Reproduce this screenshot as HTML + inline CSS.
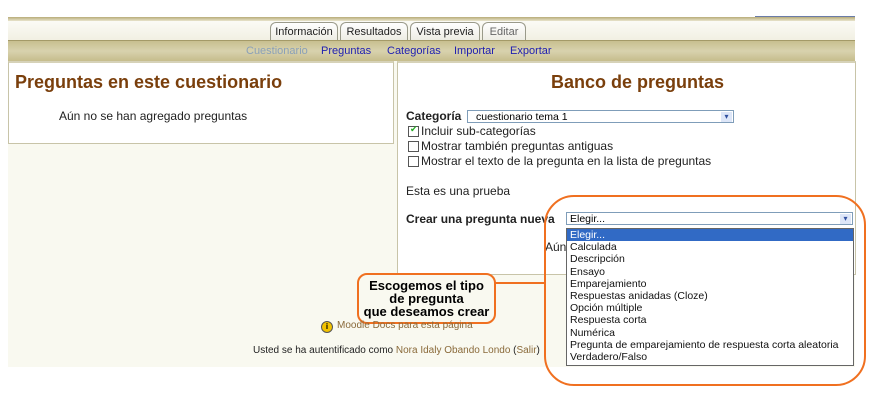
<!DOCTYPE html>
<html><head><meta charset="utf-8"><style>
body{margin:0;width:875px;height:400px;background:#fff;font-family:"Liberation Sans",sans-serif;position:relative;overflow:hidden}
.a{position:absolute}
.page{left:8px;top:18px;width:847px;height:349px;background:#f9f9f0}
.topline{left:8px;top:17px;width:847px;height:4px;background:linear-gradient(#b8ac78,#e8e4cc)}
.tabbar{left:8px;top:21px;width:847px;height:20px;background:linear-gradient(#fbfbf6,#f1efe2)}
.tab{top:22px;height:18px;border:1px solid #9a9a8a;border-bottom:none;border-radius:6px 6px 0 0;background:linear-gradient(#fff,#ecebe2);font-size:11px;line-height:18px;text-align:center;color:#222}
.sub{left:8px;top:40px;width:847px;height:20px;background:linear-gradient(#c8bf90,#d8d2ae 50%,#c6bd8c);border-top:1px solid #a49a68}
.sub span{position:absolute;top:4px;font-size:11px;color:#2020b0}
.box{background:#fff;border:1px solid #c8c4a8;border-top:2px solid #d6d2b8}
h2{margin:0;font-size:18px;color:#7a3f0c;font-weight:bold;position:absolute}
.t{font-size:12px;color:#222;position:absolute;white-space:nowrap}
.cb{position:absolute;width:9px;height:9px;border:1px solid #555;background:#fff}
.list div{height:12.2px;font-size:10.5px;line-height:12px;padding-left:3px;color:#111}
</style></head><body>
<div class="a page"></div>
<div class="a" style="left:755px;top:16px;width:100px;height:2px;background:#6a7ca8"></div>
<div class="a topline"></div>
<div class="a tabbar"></div>
<div class="a tab" style="left:270px;width:66px">Información</div>
<div class="a tab" style="left:340px;width:66px">Resultados</div>
<div class="a tab" style="left:410px;width:68px">Vista previa</div>
<div class="a tab" style="left:482px;width:42px;color:#666">Editar</div>
<div class="a sub">
<span style="left:238px;color:#8aa0b8">Cuestionario</span>
<span style="left:313px">Preguntas</span>
<span style="left:379px">Categorías</span>
<span style="left:446px">Importar</span>
<span style="left:502px">Exportar</span>
</div>
<div class="a box" style="left:8px;top:61px;width:384px;height:80px"></div>
<div class="a box" style="left:397px;top:61px;width:457px;height:211px"></div>
<h2 style="left:15px;top:72px">Preguntas en este cuestionario</h2>
<h2 style="left:551px;top:72px">Banco de preguntas</h2>
<div class="t" style="left:59px;top:109px">Aún no se han agregado preguntas</div>
<div class="t" style="left:406px;top:109px;font-weight:bold">Categoría</div>
<div class="a" style="left:467px;top:110px;height:13px;border:1px solid #7f9db9;background:#fff;font-size:10.5px;line-height:13px;padding-left:8px;box-sizing:border-box;width:267px">cuestionario tema 1<span style="position:absolute;right:1px;top:1px;width:11px;height:10px;background:#dde6f8;font-size:8px;line-height:10px;text-align:center;color:#3050a0">▾</span></div>
<div class="cb" style="left:408px;top:126px"><span style="position:absolute;left:1px;top:-3px;font-size:9px;color:#2a2">✔</span></div>
<div class="t" style="left:421px;top:124px">Incluir sub-categorías</div>
<div class="cb" style="left:408px;top:141px"></div>
<div class="t" style="left:421px;top:139px">Mostrar también preguntas antiguas</div>
<div class="cb" style="left:408px;top:156px"></div>
<div class="t" style="left:421px;top:154px">Mostrar el texto de la pregunta en la lista de preguntas</div>
<div class="t" style="left:406px;top:184px">Esta es una prueba</div>
<div class="t" style="left:406px;top:212px;font-weight:bold">Crear una pregunta nueva</div>
<div class="t" style="left:545px;top:240px">Aún</div>
<div class="a" style="left:566px;top:212px;width:287px;height:13px;border:1px solid #7f9db9;background:#fff;font-size:10.5px;line-height:13px;padding-left:3px;box-sizing:border-box">Elegir...<span style="position:absolute;right:1px;top:1px;width:11px;height:10px;background:#dde6f8;font-size:8px;line-height:10px;text-align:center;color:#3050a0">▾</span></div>
<div class="a list" style="left:566px;top:228px;width:286px;height:136px;border:1px solid #666;background:#fff">
<div style="background:#316ac5;color:#fff">Elegir...</div>
<div>Calculada</div><div>Descripción</div><div>Ensayo</div><div>Emparejamiento</div><div>Respuestas anidadas (Cloze)</div><div>Opción múltiple</div><div>Respuesta corta</div><div>Numérica</div><div>Pregunta de emparejamiento de respuesta corta aleatoria</div><div>Verdadero/Falso</div>
</div>
<div class="a" style="left:544px;top:195px;width:318px;height:187px;border:2px solid #f07020;border-radius:30px"></div>
<div class="a" style="left:495px;top:282px;width:50px;height:2px;background:#f07020"></div>
<div class="a" style="left:357px;top:273px;width:139px;height:51px;border:2px solid #f07020;border-radius:10px;background:#f9f9f0;font-size:13px;font-weight:bold;line-height:13px;text-align:center;padding-top:4px;box-sizing:border-box;color:#000">Escogemos el tipo<br>de pregunta<br>que deseamos crear</div>
<div class="a" style="left:321px;top:321px;width:10px;height:10px;border-radius:50%;background:#f2c200;border:1px solid #555;font-size:8px;line-height:10px;text-align:center;font-weight:bold">i</div>
<div class="t" style="left:337px;top:320px;font-size:10px;color:#8a6a3a">Moodle Docs para esta página</div>
<div class="t" style="left:253px;top:345px;font-size:10px">Usted se ha autentificado como <span style="color:#8a6a3a">Nora Idaly Obando Londo</span> (<span style="color:#8a6a3a">Salir</span>)</div>
</body></html>
